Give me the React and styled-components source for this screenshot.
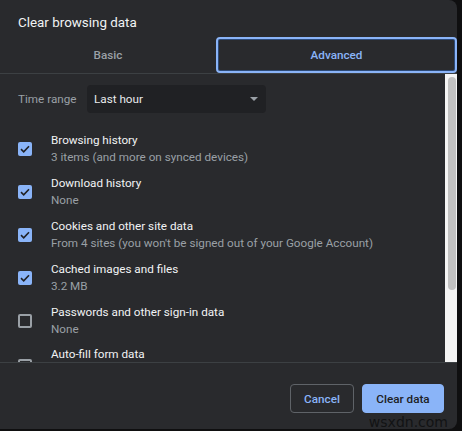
import React from "react";
import styled, { createGlobalStyle } from "styled-components";

const GlobalStyle = createGlobalStyle`
  html, body {
    margin: 0;
    padding: 0;
    background: #0f0f10;
  }
  * {
    box-sizing: border-box;
  }
`;

const Dialog = styled.div`
  position: relative;
  width: 457px;
  height: 429px;
  background: #292a2d;
  border-radius: 0 8px 8px 0;
  display: flex;
  flex-direction: column;
  font-family: Roboto, "Liberation Sans", sans-serif;
  color: #e8eaed;
  overflow: hidden;
`;

const Title = styled.h2`
  margin: 0;
  height: 37px;
  padding: 14px 18px 0;
  font-size: 13.4px;
  font-weight: 400;
  line-height: 17px;
  color: #f1f3f4;
`;

const Tabs = styled.div`
  display: flex;
  height: 37px;
  border-bottom: 1px solid #3c4043;
`;

const Tab = styled.div`
  flex: ${(p) => (p.$active ? "0 0 241px" : "1")};
  display: flex;
  align-items: center;
  justify-content: center;
  font-size: 11.7px;
  font-weight: 500;
  color: ${(p) => (p.$active ? "#8ab4f8" : "#9aa0a6")};
  border: ${(p) => (p.$active ? "2px solid #8ab4f8" : "none")};
  border-radius: 4px;
  box-shadow: ${(p) => (p.$active ? "inset 0 0 0 1px #2d4a78" : "none")};
`;

const Body = styled.div`
  display: flex;
  height: 289px;
  border-bottom: 1px solid #3c4043;
`;

const ScrollArea = styled.div`
  flex: 1;
  overflow: hidden;
  padding: 11px 0 0 18px;
`;

const Track = styled.div`
  width: 12px;
  background: #f4f4f4;
  padding: 3px 1px 0 3px;
`;

const Thumb = styled.div`
  height: 213px;
  background: #c1c1c1;
  border-radius: 4px;
`;

const RangeRow = styled.div`
  display: flex;
  align-items: center;
  height: 28px;
  margin-bottom: 14px;
`;

const RangeLabel = styled.span`
  width: 69px;
  font-size: 11.7px;
  color: #9aa0a6;
`;

const Select = styled.div`
  width: 179px;
  height: 28px;
  background: #202124;
  border-radius: 4px;
  display: flex;
  align-items: center;
  justify-content: space-between;
  padding: 0 8px 0 7px;
  font-size: 11.7px;
  color: #e8eaed;
`;

const Arrow = styled.span`
  width: 0;
  height: 0;
  border-left: 4px solid transparent;
  border-right: 4px solid transparent;
  border-top: 4px solid #9aa0a6;
`;

const Item = styled.div`
  display: flex;
  align-items: ${(p) => (p.$single ? "flex-start" : "center")};
  padding-top: ${(p) => (p.$single ? "4px" : "0")};
  height: 43px;
`;

const Box = styled.span`
  flex: none;
  width: 14px;
  height: 14px;
  margin-right: 19px;
  margin-top: ${(p) => (p.$single ? "13px" : "0")};
  border-radius: 2px;
  display: flex;
  align-items: center;
  justify-content: center;
  background: ${(p) => (p.$checked ? "#8ab4f8" : "transparent")};
  border: ${(p) => (p.$checked ? "none" : "2px solid #9aa0a6")};
`;

const Texts = styled.div`
  display: flex;
  flex-direction: column;
`;

const ItemTitle = styled.span`
  font-size: 11.7px;
  line-height: 17px;
  color: #f1f3f4;
`;

const ItemSub = styled.span`
  font-size: 11.7px;
  line-height: 17px;
  color: #9aa0a6;
`;

const Footer = styled.div`
  flex: 1;
  display: flex;
  justify-content: flex-end;
  align-items: flex-start;
  gap: 8px;
  padding: 21px 13px 0 0;
`;

const Button = styled.button`
  height: 29px;
  width: ${(p) => (p.$primary ? "82px" : "64px")};
  padding: 0;
  border-radius: 4px;
  font-family: Roboto, "Liberation Sans", sans-serif;
  font-size: 11.7px;
  font-weight: 500;
  border: 1px solid ${(p) => (p.$primary ? "#8ab4f8" : "#5f6368")};
  background: ${(p) => (p.$primary ? "#8ab4f8" : "transparent")};
  color: ${(p) => (p.$primary ? "#202124" : "#8ab4f8")};
`;

const Watermark = styled.span`
  position: absolute;
  right: 9px;
  bottom: 0;
  font-family: "DejaVu Sans", sans-serif;
  font-size: 14px;
  line-height: 14px;
  color: #121314;
`;

const items = [
  { title: "Browsing history", sub: "3 items (and more on synced devices)", checked: true },
  { title: "Download history", sub: "None", checked: true },
  {
    title: "Cookies and other site data",
    sub: "From 4 sites (you won't be signed out of your Google Account)",
    checked: true,
  },
  { title: "Cached images and files", sub: "3.2 MB", checked: true },
  { title: "Passwords and other sign-in data", sub: "None", checked: false },
  { title: "Auto-fill form data", checked: false },
];

const Check = () => (
  <svg width="10" height="8" viewBox="0 0 10 8">
    <path d="M1 4.2 L3.7 6.8 L9 1.2" fill="none" stroke="#202124" strokeWidth="1.6" />
  </svg>
);

export default function App() {
  return (
    <>
      <GlobalStyle />
      <Dialog>
        <Title>Clear browsing data</Title>
        <Tabs>
          <Tab>Basic</Tab>
          <Tab $active>Advanced</Tab>
        </Tabs>
        <Body>
          <ScrollArea>
            <RangeRow>
              <RangeLabel>Time range</RangeLabel>
              <Select>
                Last hour
                <Arrow />
              </Select>
            </RangeRow>
            {items.map((it) => (
              <Item key={it.title} $single={!it.sub}>
                <Box $checked={it.checked} $single={!it.sub}>
                  {it.checked && <Check />}
                </Box>
                <Texts>
                  <ItemTitle>{it.title}</ItemTitle>
                  {it.sub && <ItemSub>{it.sub}</ItemSub>}
                </Texts>
              </Item>
            ))}
          </ScrollArea>
          <Track>
            <Thumb />
          </Track>
        </Body>
        <Footer>
          <Button>Cancel</Button>
          <Button $primary>Clear data</Button>
        </Footer>
        <Watermark>wsxdn.com</Watermark>
      </Dialog>
    </>
  );
}
